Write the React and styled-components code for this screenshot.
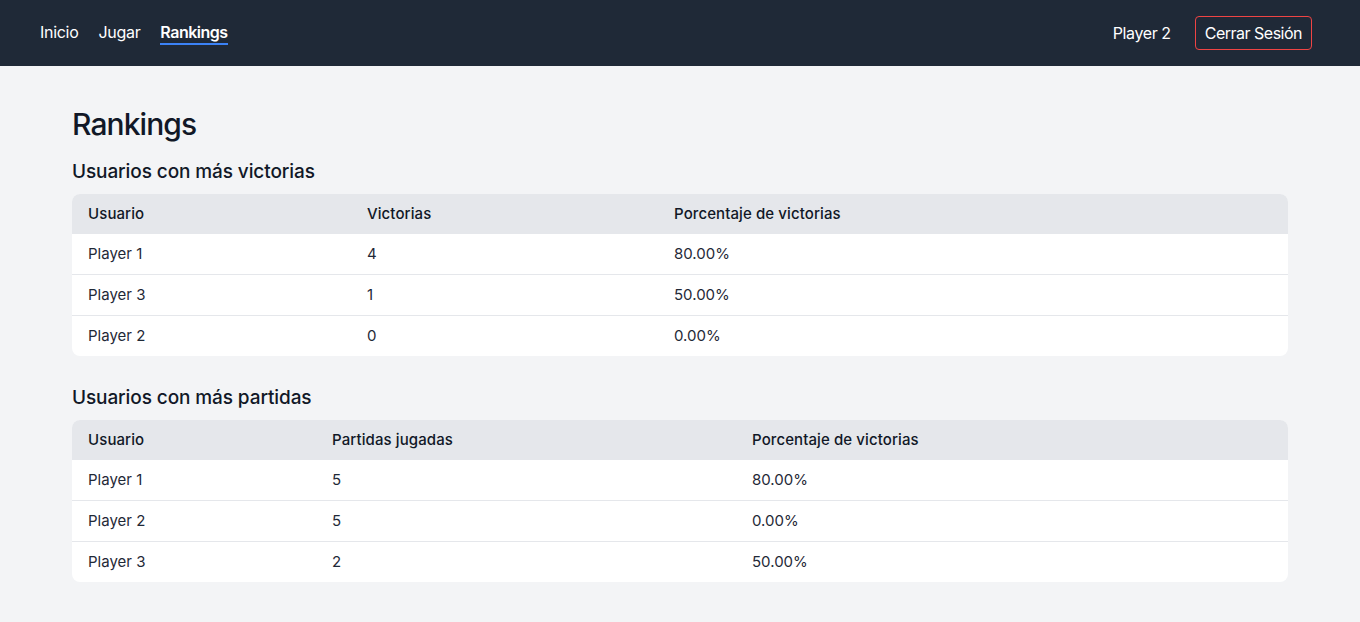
import React from 'react';
import styled, { createGlobalStyle } from 'styled-components';

const GlobalStyle = createGlobalStyle`
  * { box-sizing: border-box; }
  body {
    margin: 0;
    font-family: Inter, "Noto Sans", sans-serif;
    background-color: #f3f4f6;
    color: #111827;
  }
`;

const NavBar = styled.nav`
  height: 66px;
  background-color: #1f2937;
  display: flex;
  align-items: center;
  justify-content: space-between;
  padding: 0 48px 0 40px;
`;

const NavLinks = styled.div`
  display: flex;
  align-items: center;
  gap: 20px;
`;

const NavLink = styled.a`
  color: #ffffff;
  text-decoration: none;
  font-size: 16px;
  line-height: 20px;
  font-weight: ${props => (props.$active ? 600 : 400)};
  letter-spacing: ${props => (props.$active ? '-0.5px' : '-0.3px')};
  padding-bottom: 1px;
  border-bottom: 2px solid ${props => (props.$active ? '#3b82f6' : 'transparent')};
  margin-top: 1px;
`;

const UserArea = styled.div`
  display: flex;
  align-items: center;
  gap: 24px;
`;

const UserName = styled.span`
  color: #ffffff;
  font-size: 16px;
  letter-spacing: -0.4px;
`;

const LogoutButton = styled.button`
  background: transparent;
  color: #ffffff;
  border: 1px solid #ef4444;
  border-radius: 4px;
  font-family: inherit;
  font-size: 16px;
  padding: 0 9px;
  height: 34px;
  letter-spacing: -0.5px;
`;

const Main = styled.main`
  max-width: 1280px;
  margin: 0 auto;
  padding: 40px 32px 40px;
`;

const Title = styled.h1`
  font-size: 30px;
  font-weight: 500;
  line-height: 36px;
  margin: 0 0 16px;
  letter-spacing: -0.9px;
`;

const SectionTitle = styled.h2`
  font-size: 19px;
  font-weight: 500;
  line-height: 28px;
  margin: 0 0 8px;
  letter-spacing: -0.1px;
`;

const Section = styled.section`
  margin-bottom: 28px;
`;

const Table = styled.table`
  width: 100%;
  border-collapse: separate;
  border-spacing: 0;
  background-color: #ffffff;
  border-radius: 8px;
  overflow: hidden;
  table-layout: fixed;
`;

const HeadCell = styled.th`
  background-color: #e5e7eb;
  text-align: left;
  font-weight: 500;
  font-size: 15px;
  line-height: 18px;
  padding: 11px 16px;
  letter-spacing: 0.1px;
  width: ${props => props.$width}px;
`;

const Row = styled.tr`
  & + & td { border-top: 1px solid #e5e7eb; }
`;

const Cell = styled.td`
  font-size: 15px;
  line-height: 18px;
  padding: 11px 16px;
  color: #1f2937;
  letter-spacing: 0px;
`;

const RankingTable = ({ columns, widths, rows }) => (
  <Table>
    <thead>
      <tr>
        {columns.map((c, i) => (
          <HeadCell key={c} $width={widths[i]}>{c}</HeadCell>
        ))}
      </tr>
    </thead>
    <tbody>
      {rows.map(r => (
        <Row key={r[0]}>
          {r.map((v, i) => <Cell key={i}>{v}</Cell>)}
        </Row>
      ))}
    </tbody>
  </Table>
);

const winsRows = [
  ['Player 1', '4', '80.00%'],
  ['Player 3', '1', '50.00%'],
  ['Player 2', '0', '0.00%'],
];

const gamesRows = [
  ['Player 1', '5', '80.00%'],
  ['Player 2', '5', '0.00%'],
  ['Player 3', '2', '50.00%'],
];

export default function App() {
  return (
    <>
      <GlobalStyle />
      <NavBar>
        <NavLinks>
          <NavLink href="#">Inicio</NavLink>
          <NavLink href="#">Jugar</NavLink>
          <NavLink href="#" $active>Rankings</NavLink>
        </NavLinks>
        <UserArea>
          <UserName>Player 2</UserName>
          <LogoutButton>Cerrar Sesión</LogoutButton>
        </UserArea>
      </NavBar>
      <Main>
        <Title>Rankings</Title>
        <Section>
          <SectionTitle>Usuarios con más victorias</SectionTitle>
          <RankingTable
            columns={['Usuario', 'Victorias', 'Porcentaje de victorias']}
            widths={[279, 307, 630]}
            rows={winsRows}
          />
        </Section>
        <Section>
          <SectionTitle>Usuarios con más partidas</SectionTitle>
          <RankingTable
            columns={['Usuario', 'Partidas jugadas', 'Porcentaje de victorias']}
            widths={[244, 420, 552]}
            rows={gamesRows}
          />
        </Section>
      </Main>
    </>
  );
}
